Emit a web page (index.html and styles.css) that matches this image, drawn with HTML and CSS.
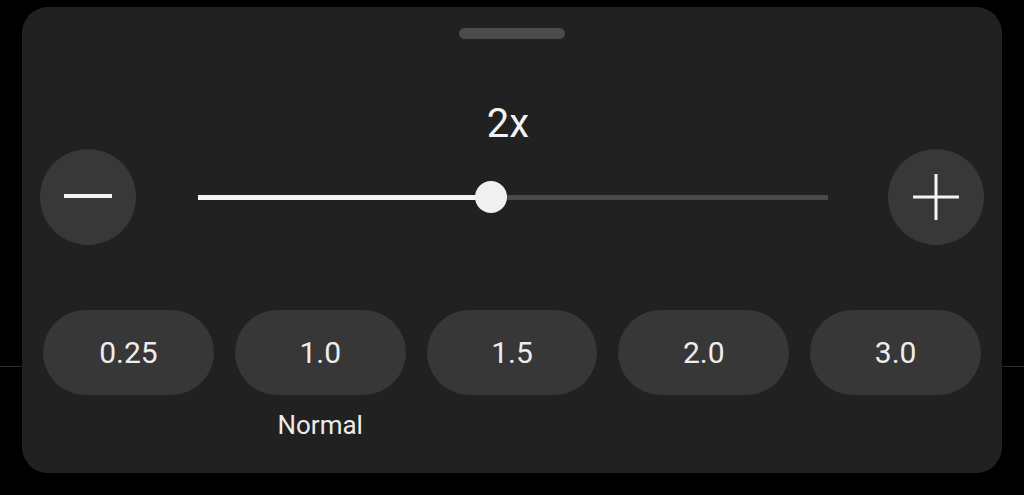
FILE: index.html
```html
<html>
<head>
    <title>Playback Speed</title>
    <meta charset="UTF-8">
    <meta name="viewport" content="width=device-width, initial-scale=1">
    <link rel="stylesheet" href="styles.css">
</head>
<body>
    <div class="panel">
        <div class="handle"></div>
        <div class="speed-value">2x</div>
        <div class="controls">
            <button class="round-btn" aria-label="Slower">
                <svg width="48" height="48" viewBox="0 0 48 48">
                    <line x1="0" y1="23" x2="48" y2="23" stroke="#f4f4f4" stroke-width="4" />
                </svg>
            </button>
            <div class="slider">
                <div class="track">
                    <div class="fill" style="width: 46.5%"></div>
                </div>
                <div class="thumb" style="left: 46.5%"></div>
            </div>
            <button class="round-btn" aria-label="Faster">
                <svg width="48" height="48" viewBox="0 0 48 48">
                    <line x1="1" y1="24" x2="47" y2="24" stroke="#f4f4f4" stroke-width="3" />
                    <line x1="24" y1="1" x2="24" y2="47" stroke="#f4f4f4" stroke-width="3" />
                </svg>
            </button>
        </div>
        <div class="presets">
            <div class="preset">
                <button class="preset-btn">0.25</button>
            </div>
            <div class="preset">
                <button class="preset-btn">1.0</button>
                <div class="preset-label">Normal</div>
            </div>
            <div class="preset">
                <button class="preset-btn">1.5</button>
            </div>
            <div class="preset">
                <button class="preset-btn">2.0</button>
            </div>
            <div class="preset">
                <button class="preset-btn">3.0</button>
            </div>
        </div>
    </div>
</body>
</html>
```

FILE: styles.css
```css
body {
    margin: 0;
    font-family: Roboto, "Noto Sans", Arial, sans-serif;
    color: #f2f2f2;
    background: linear-gradient(to bottom, transparent 366px, #2e2e2e 366px, #2e2e2e 367px, transparent 367px), #000;
}

.panel {
    box-sizing: border-box;
    width: 980px;
    height: 466px;
    margin: 7px 0 0 22px;
    padding: 21px 18px 0 18px;
    background-color: #212121;
    border-radius: 26px;
    display: flex;
    flex-direction: column;
}

.handle {
    width: 106px;
    height: 11px;
    margin: 0 auto;
    border-radius: 6px;
    background-color: #4b4b4b;
}

.speed-value {
    margin-top: 61px;
    padding-right: 8px;
    font-size: 40px;
    line-height: 48px;
    text-align: center;
}

.controls {
    margin-top: 1px;
    display: flex;
    align-items: center;
}

.round-btn {
    width: 96px;
    height: 96px;
    padding: 0;
    border: none;
    border-radius: 50%;
    background-color: #383838;
    display: flex;
    align-items: center;
    justify-content: center;
    flex-shrink: 0;
}

.slider {
    position: relative;
    flex: 1;
    height: 32px;
    margin: 0 60px 0 62px;
    display: flex;
    align-items: center;
}

.track {
    width: 100%;
    height: 5px;
    background-color: #4a4a4a;
}

.fill {
    height: 100%;
    background-color: #f4f4f4;
}

.thumb {
    position: absolute;
    top: 0;
    width: 32px;
    height: 32px;
    margin-left: -16px;
    border-radius: 50%;
    background-color: #f0f0f0;
}

.presets {
    margin: 65px 3px 0 3px;
    display: flex;
    gap: 21px;
}

.preset {
    flex: 1;
    display: flex;
    flex-direction: column;
    align-items: center;
}

.preset-btn {
    width: 100%;
    height: 85px;
    border: none;
    border-radius: 43px;
    background-color: #373737;
    color: #ededed;
    font-family: Roboto, "Noto Sans", Arial, sans-serif;
    font-size: 30px;
}

.preset-label {
    margin-top: 15px;
    font-size: 26px;
    line-height: 30px;
    color: #ececec;
}
```
